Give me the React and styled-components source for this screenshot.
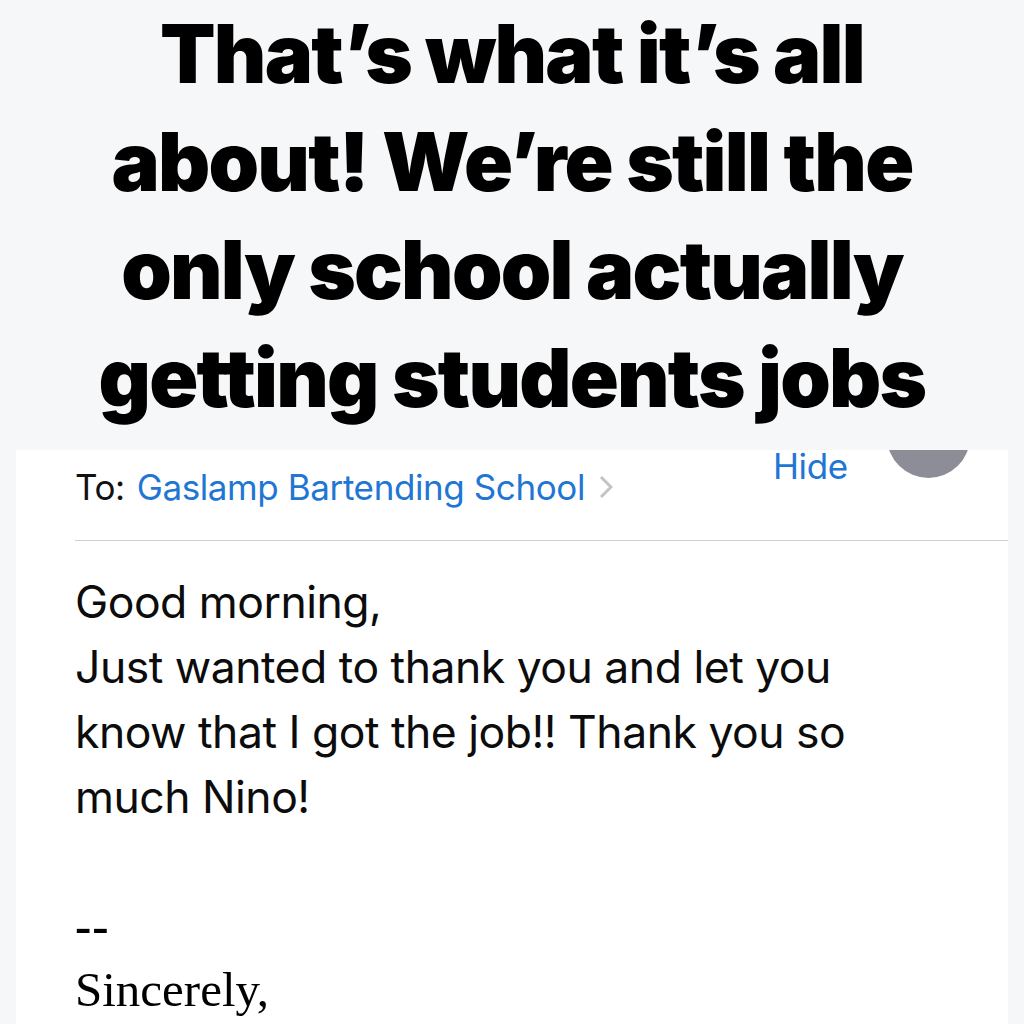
import React from "react";
import styled, { createGlobalStyle } from "styled-components";

const GlobalStyle = createGlobalStyle`
  html, body {
    margin: 0;
    padding: 0;
    background: #f6f7f9;
  }
  body {
    font-family: "Inter", "Liberation Sans", sans-serif;
  }
`;

const Page = styled.div`
  width: 1024px;
  height: 1024px;
  overflow: hidden;
  background: #f6f7f9;
  display: flex;
  flex-direction: column;
`;

const Headline = styled.h1`
  margin: 0;
  padding: 0;
  height: 450px;
  flex-shrink: 0;
  box-sizing: border-box;
  text-align: center;
  font-family: "Inter", "Liberation Sans", sans-serif;
  font-weight: 900;
  font-size: 81px;
  line-height: 108px;
  letter-spacing: -1.8px;
  color: #000;
`;

const Card = styled.div`
  flex: 1;
  margin: 0 16px;
  background: #fff;
  position: relative;
  overflow: hidden;
  padding: 0 0 0 59px;
`;

const Avatar = styled.div`
  position: absolute;
  top: -55px;
  left: 871px;
  width: 83px;
  height: 83px;
  border-radius: 50%;
  background: #8d8d97;
`;

const HeaderRow = styled.div`
  display: flex;
  align-items: flex-start;
  height: 90px;
  border-bottom: 1px solid #cfcfd2;
  position: relative;
`;

const ToLine = styled.div`
  display: flex;
  align-items: center;
  margin-top: 16px;
  font-size: 35px;
  letter-spacing: -0.4px;
  color: #111;
`;

const Label = styled.span`
  margin-right: 12px;
`;

const Link = styled.span`
  color: #1f76d3;
`;

const Chevron = styled.svg`
  margin-left: 14px;
  width: 14px;
  height: 24px;
`;

const HideLink = styled.span`
  position: absolute;
  left: 698px;
  top: 0;
  font-size: 35px;
  line-height: 32px;
  color: #1f76d3;
  letter-spacing: -0.4px;
`;

const Body = styled.div`
  padding-top: 29px;
  font-size: 44.5px;
  line-height: 65px;
  letter-spacing: -0.5px;
  color: #0c0c0c;
`;

const Para = styled.p`
  margin: 0;
`;

const Signature = styled.div`
  margin-top: 64px;
  font-family: "Liberation Serif", "Times New Roman", serif;
  font-size: 49px;
  line-height: 64px;
  color: #000;
`;

const Dashes = styled.div`
  font-weight: 700;
  letter-spacing: 1px;
`;

export default function App() {
  return (
    <>
      <GlobalStyle />
      <Page>
        <Headline>
          That’s what it’s all
          <br />
          about! We’re still the
          <br />
          only school actually
          <br />
          getting students jobs
        </Headline>
        <Card>
          <Avatar />
          <HeaderRow>
            <ToLine>
              <Label>To:</Label>
              <Link>Gaslamp Bartending School</Link>
              <Chevron viewBox="0 0 14 24">
                <path
                  d="M2 2 L12 12 L2 22"
                  fill="none"
                  stroke="#c4c4c8"
                  strokeWidth="3"
                />
              </Chevron>
            </ToLine>
            <HideLink>Hide</HideLink>
          </HeaderRow>
          <Body>
            <Para>Good morning,</Para>
            <Para>
              Just wanted to thank you and let you
              <br />
              know that I got the job!! Thank you so
              <br />
              much Nino!
            </Para>
          </Body>
          <Signature>
            <Dashes>--</Dashes>
            Sincerely,
          </Signature>
        </Card>
      </Page>
    </>
  );
}
